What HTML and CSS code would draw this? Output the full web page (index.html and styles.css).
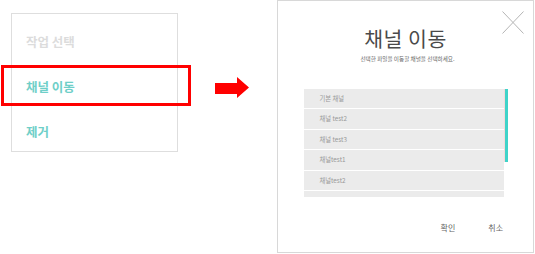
FILE: index.html
```html
<!DOCTYPE html>
<html>
<head>
    <meta charset="UTF-8" />
    <title>채널 이동</title>
    <link rel="stylesheet" href="styles.css">
</head>
<body>
    <div class="scene">
        <div class="left">
            <ul class="menu">
                <li class="menu-item disabled">작업 선택</li>
                <li class="menu-item">채널 이동</li>
                <li class="menu-item">제거</li>
            </ul>
            <div class="highlight"></div>
        </div>

        <svg class="arrow" width="34" height="21" viewBox="0 0 34 21">
            <path d="M0 6 H22 V0 L34 10.5 L22 21 V17 H0 Z" fill="#ff0000" />
        </svg>

        <div class="modal">
            <svg class="close" width="22" height="23" viewBox="0 0 22 23">
                <path d="M0.5 0.5 L21.5 22.5 M21.5 0.5 L0.5 22.5" stroke="#b5b5b5" stroke-width="1" fill="none" />
            </svg>
            <h2 class="modal-title">채널 이동</h2>
            <p class="modal-desc">선택한 파일을 이동할 채널을 선택하세요.</p>

            <div class="channel-box">
                <ul class="channel-list">
                    <li>기본 채널</li>
                    <li>채널 test2</li>
                    <li>채널 test3</li>
                    <li>채널test1</li>
                    <li>채널test2</li>
                    <li></li>
                </ul>
                <div class="scroll-track">
                    <div class="scroll-thumb"></div>
                </div>
            </div>

            <div class="modal-buttons">
                <span class="btn">확인</span>
                <span class="btn">취소</span>
            </div>
        </div>
    </div>
</body>
</html>
```

FILE: styles.css
```css
body {
    margin: 0;
    font-family: "Noto Sans CJK KR", "Noto Sans", sans-serif;
    background: #fff;
}

.scene {
    display: flex;
    align-items: flex-start;
    width: 535px;
    height: 254px;
}

.left {
    width: 215px;
    padding: 13px 0 0 11px;
    box-sizing: border-box;
}

.menu {
    list-style: none;
    margin: 0;
    padding: 5px 0 0;
    width: 167px;
    height: 139px;
    box-sizing: border-box;
    border: 1px solid #dedede;
}

.menu-item {
    height: 45px;
    line-height: 45px;
    padding-left: 14px;
    font-size: 12.5px;
    font-weight: bold;
    color: #6fcfc8;
}

.menu-item.disabled {
    color: #dcdcdc;
}

.highlight {
    position: absolute;
    left: 1px;
    top: 65px;
    width: 190px;
    height: 41px;
    box-sizing: border-box;
    border: 3px solid #ff0000;
}

.arrow {
    margin-top: 77px;
    flex-shrink: 0;
}

.modal {
    position: relative;
    margin-left: 28px;
    width: 257px;
    height: 253px;
    box-sizing: border-box;
    border: 1px solid #d8d8d8;
    display: flex;
    flex-direction: column;
    align-items: center;
}

.close {
    position: absolute;
    right: 9px;
    top: 10px;
}

.modal-title {
    margin: 24px 0 0;
    font-size: 20.5px;
    font-weight: normal;
    line-height: 26px;
    color: #4a4a4a;
    letter-spacing: 0.5px;
}

.modal-desc {
    margin: 3px 0 0 4px;
    font-size: 5.6px;
    line-height: 10px;
    color: #666;
}

.channel-box {
    display: flex;
    margin-top: 25px;
    width: 204px;
    height: 108px;
    overflow: hidden;
}

.channel-list {
    list-style: none;
    margin: 0;
    padding: 0;
    width: 200px;
}

.channel-list li {
    height: 19.4px;
    line-height: 19.4px;
    margin-bottom: 1px;
    padding-left: 16px;
    background: #ebebeb;
    font-size: 6.3px;
    color: #999;
}

.scroll-track {
    width: 4px;
}

.scroll-thumb {
    height: 73px;
    background: #3fd3c9;
    border-left: 1px solid #f2d9d9;
    box-sizing: border-box;
}

.modal-buttons {
    display: flex;
    gap: 33px;
    align-self: flex-end;
    margin: 25px 30px 0 0;
}

.btn {
    font-size: 8px;
    color: #666;
}
```
